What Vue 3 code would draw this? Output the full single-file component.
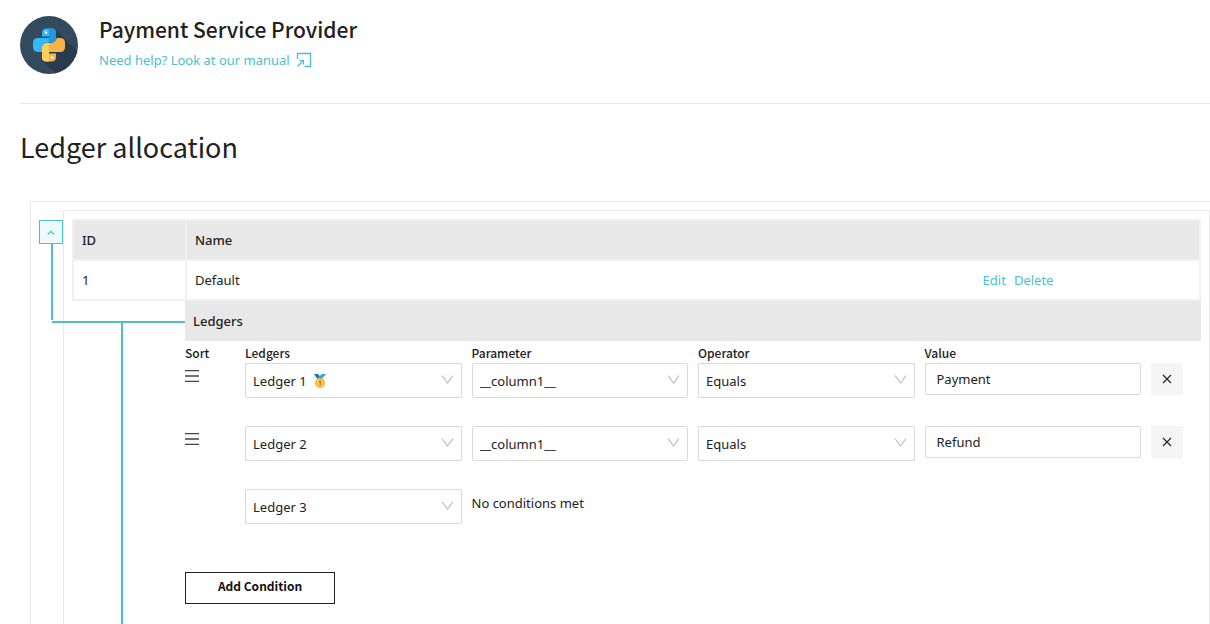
<script setup>
import { ref } from 'vue'

const open = ref(true)
const columns = ['Ledgers', 'Parameter', 'Operator', 'Value']
const ledgers = ['Ledger 1', 'Ledger 2', 'Ledger 3']
const rows = ref([
  { ledger: 'Ledger 1', parameter: '__column1__', operator: 'Equals', value: 'Payment', medal: true },
  { ledger: 'Ledger 2', parameter: '__column1__', operator: 'Equals', value: 'Refund', medal: false }
])
const fallback = ref('Ledger 3')

function addCondition() {
  rows.value.push({ ledger: 'Ledger 1', parameter: '__column1__', operator: 'Equals', value: '', medal: false })
}
</script>

<template>
  <div class="page">
    <header class="header">
      <svg class="logo" viewBox="0 0 58 58" aria-hidden="true">
        <defs>
          <clipPath id="disc"><circle cx="29" cy="29" r="29" /></clipPath>
        </defs>
        <circle cx="29" cy="29" r="29" fill="#334a5e" />
        <path clip-path="url(#disc)" d="M36 14L66 44V66H44L22 44L30 20Z" fill="#2b3b4e" />
        <path d="M22 20.500V17Q22 12.500 26.500 12.500H31.500Q36 12.500 36 17V26.500H28Q22 27 22 36H18.500Q13 36 13 31V26.500Q13 22 18 22H29V20.500Z" fill="#32b8fb" />
        <path d="M29 12.500H31.500Q36 12.500 36 17V26.500H29V20.500Z" fill="#2599dd" />
        <path d="M36 37.500V41Q36 45.500 31.500 45.500H26.500Q22 45.500 22 41V33Q22 27 28 27H32Q36.500 26 36.500 22H40Q45 22 45 27V31Q45 36 40 36H29V37.500Z" fill="#f8b24a" />
        <path d="M29 27V45.500H26.500Q22 45.500 22 41V33Q22 27 28 27Z" fill="#ffd05c" />
        <circle cx="26" cy="16.500" r="1.300" fill="#fff" />
        <circle cx="32" cy="41.500" r="1.300" fill="#fff" />
      </svg>
      <div>
        <h1 class="title">Payment Service Provider</h1>
        <a class="manual" href="#">
          Need help? Look at our manual
          <svg width="16" height="16" viewBox="0 0 16 16" fill="none" stroke="currentColor" aria-hidden="true">
            <path d="M1.500 7V1.500H14.500V14.500H8.500" stroke-width="1.300" />
            <path d="M1.500 14.500L7.500 8.500M3.500 8.500H7.500V12.500" stroke-width="1.200" />
          </svg>
        </a>
      </div>
    </header>

    <h2 class="heading">Ledger allocation</h2>

    <main class="frame">
      <div class="gutter">
        <button class="toggle" type="button" aria-label="Collapse" @click="open = !open">
          <svg width="8" height="5" viewBox="0 0 8 5" fill="none" stroke="currentColor" stroke-width="1.300" aria-hidden="true">
            <path d="M1 4.300L4 1.300L7 4.300" />
          </svg>
        </button>
        <div v-if="open" class="stem"></div>
      </div>

      <section class="panel">
        <table class="table">
          <colgroup>
            <col class="col-id" />
            <col />
            <col class="col-actions" />
          </colgroup>
          <thead>
            <tr>
              <th class="id">ID</th>
              <th colspan="2">Name</th>
            </tr>
          </thead>
          <tbody>
            <tr>
              <td class="id">1</td>
              <td class="name">Default</td>
              <td class="actions"><a href="#">Edit</a><a href="#">Delete</a></td>
            </tr>
          </tbody>
        </table>

        <div v-if="open" class="nested">
          <div class="branch"></div>
          <div class="trunk"></div>
          <h3 class="bar">Ledgers</h3>

          <div class="rules">
            <div class="grid labels">
              <span>Sort</span>
              <span v-for="c in columns" :key="c">{{ c }}</span>
            </div>

            <div v-for="(row, i) in rows" :key="i" class="grid row">
              <button class="sort" type="button" aria-label="Sort">
                <svg width="14" height="12" viewBox="0 0 14 12" stroke="#444" stroke-width="1.300" aria-hidden="true">
                  <path d="M0 .7H14M0 6H14M0 11.300H14" />
                </svg>
              </button>
              <div class="field">
                <select v-model="row.ledger" aria-label="Ledger">
                  <option v-for="l in ledgers" :key="l">{{ l }}</option>
                </select>
                <svg v-if="row.medal" class="medal" viewBox="0 0 14 14" aria-hidden="true">
                  <path d="M1 0H5L9 5L5 6Z" fill="#1b75b8" />
                  <path d="M13 0H9L4 4.500L8 6Z" fill="#28a9e6" />
                  <circle cx="7" cy="9" r="5" fill="#f9b233" />
                  <circle cx="7" cy="9" r="3.600" fill="#ffc957" />
                  <path d="M6.200 7.700L7.200 7V11" fill="none" stroke="#8a5a2a" stroke-width="1" />
                </svg>
                <svg class="arrow" viewBox="0 0 12 9" aria-hidden="true"><path d="M.6 .6L6 8L11.400 .6" /></svg>
              </div>
              <div class="field">
                <select v-model="row.parameter" aria-label="Parameter"><option>__column1__</option></select>
                <svg class="arrow" viewBox="0 0 12 9" aria-hidden="true"><path d="M.6 .6L6 8L11.400 .6" /></svg>
              </div>
              <div class="field">
                <select v-model="row.operator" aria-label="Operator"><option>Equals</option></select>
                <svg class="arrow" viewBox="0 0 12 9" aria-hidden="true"><path d="M.6 .6L6 8L11.400 .6" /></svg>
              </div>
              <input v-model="row.value" class="value" type="text" aria-label="Value" />
              <button class="remove" type="button" aria-label="Remove" @click="rows.splice(i, 1)">
                <svg width="10" height="10" viewBox="0 0 10 10" stroke="#222" stroke-width="1.100" aria-hidden="true">
                  <path d="M1 1L9 9M9 1L1 9" />
                </svg>
              </button>
            </div>

            <div class="grid row">
              <span></span>
              <div class="field">
                <select v-model="fallback" aria-label="Default ledger">
                  <option v-for="l in ledgers" :key="l">{{ l }}</option>
                </select>
                <svg class="arrow" viewBox="0 0 12 9" aria-hidden="true"><path d="M.6 .6L6 8L11.400 .6" /></svg>
              </div>
              <span class="none">No conditions met</span>
            </div>

            <button class="add" type="button" @click="addCondition">Add Condition</button>
          </div>
        </div>
      </section>
    </main>
  </div>
</template>

<style>
body {
  background: #fff;
}
</style>

<style scoped>
.page,
.page * {
  box-sizing: border-box;
}
.page {
  display: flex;
  flex-direction: column;
  min-height: 100vh;
  font: 13px/20px "Noto Sans", "Open Sans", sans-serif;
  color: #212121;
}
a {
  color: #4bbfca;
  text-decoration: none;
}
button,
select,
input {
  font: inherit;
  color: inherit;
  margin: 0;
}
.header {
  display: flex;
  gap: 21px;
  height: 104px;
  margin-left: 20px;
  padding-top: 15px;
  border-bottom: 1px solid #e8e8e8;
}
.logo {
  width: 58px;
  height: 58px;
  margin-top: 1px;
}
.title {
  margin: 0;
  font: 500 21px/28px "Noto Sans CJK SC", sans-serif;
}
.manual {
  display: flex;
  align-items: center;
  gap: 6px;
  margin-top: 7px;
}
.heading {
  margin: 23px 0 34px 20px;
  font: 400 27px/40px "Noto Sans CJK SC", sans-serif;
}
.frame {
  flex: 1;
  display: flex;
  margin-left: 30px;
  padding: 8px 0 0 8px;
  border: solid #e8e8e8;
  border-width: 1px 0 0 1px;
  border-top-left-radius: 2px;
}
.gutter {
  width: 24px;
  padding-top: 10px;
}
.toggle {
  display: flex;
  align-items: center;
  justify-content: center;
  width: 24px;
  height: 24px;
  padding: 0;
  background: #edf9fa;
  border: 1px solid #4bbfca;
  color: #4bbfca;
}
.stem {
  width: 2px;
  height: 76px;
  margin-left: 12px;
  background: #4bbfca;
}
.panel {
  flex: 1;
  display: flex;
  flex-direction: column;
  min-width: 0;
  padding: 8px 8px 0;
  border: 1px solid #e8e8e8;
  border-bottom: 0;
  border-radius: 2px 2px 0 0;
}
.table {
  width: 100%;
  border-collapse: collapse;
  table-layout: fixed;
}
.table th,
.table td {
  height: 40px;
  padding: 0 8px;
  border: 2px solid #f0f0f0;
  text-align: left;
}
.table th {
  background: #e8e8e8;
  font-weight: 500;
}
.col-id {
  width: 113px;
}
.col-actions {
  width: 20%;
}
.table .name {
  border-right: 0;
}
.table .actions {
  border-left: 0;
}
.actions a + a {
  margin-left: 8px;
}
.nested {
  position: relative;
  flex: 1;
  padding-left: 113px;
}
.branch {
  position: absolute;
  top: 20px;
  left: -20px;
  width: 133px;
  height: 2px;
  background: #4bbfca;
}
.trunk {
  position: absolute;
  top: 20px;
  bottom: 0;
  left: 49px;
  width: 2px;
  background: #4bbfca;
}
.bar {
  margin: 0;
  padding: 0 8px;
  font-size: 13px;
  font-weight: 500;
  line-height: 40px;
  background: #e8e8e8;
}
.rules {
  padding: 2px 18px 20px 0;
}
.grid {
  display: grid;
  grid-template-columns: 50px repeat(4, minmax(0, 1fr)) 32px;
  column-gap: 10px;
  align-items: start;
}
.labels {
  font: 500 12px/20px "Noto Sans CJK SC", sans-serif;
}
.row {
  margin-bottom: 28px;
}
.sort {
  width: 14px;
  height: 26px;
  padding: 0;
  border: 0;
  background: none;
}
.sort svg {
  display: block;
  margin: auto;
}
.field {
  position: relative;
}
.field select {
  display: block;
  width: 100%;
  height: 35px;
  padding: 0 7px;
  appearance: none;
  background: #fff;
  border: 1px solid #d9d9d9;
  border-radius: 2px;
}
.arrow {
  position: absolute;
  top: 12px;
  right: 8px;
  width: 13px;
  height: 9px;
  fill: none;
  stroke: #bfbfbf;
  stroke-width: 1.2;
  pointer-events: none;
}
.medal {
  position: absolute;
  top: 11px;
  left: 68px;
  width: 14px;
  height: 14px;
  pointer-events: none;
}
.value {
  width: 100%;
  height: 32px;
  padding: 0 11px;
  background: #fff;
  border: 1px solid #d9d9d9;
  border-radius: 2px;
}
.remove {
  display: flex;
  align-items: center;
  justify-content: center;
  height: 32px;
  padding: 0;
  border: 0;
  background: #f5f5f5;
}
.none {
  line-height: 28px;
}
.add {
  display: block;
  width: 150px;
  height: 32px;
  margin-top: 48px;
  padding: 0 0 4px;
  border: 1px solid #212121;
  background: #fff;
  color: #111;
  font: 700 12px/20px "Noto Sans CJK SC", sans-serif;
}
</style>
